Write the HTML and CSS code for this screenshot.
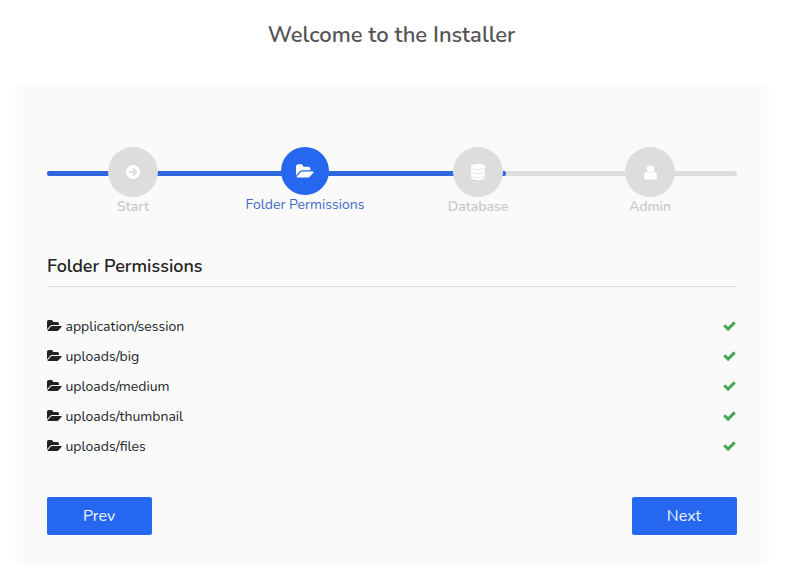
FILE: index.html
```html
<!DOCTYPE html>
<html lang="en">
<head>
<meta charset="utf-8">
<title>Installer</title>
<link rel="stylesheet" href="styles.css">
</head>
<body>
<svg class="sprite" width="0" height="0" aria-hidden="true">
  <symbol id="folder" viewBox="0 0 1920 1792"><path d="M1879 952q0 31-31 66l-336 396q-43 51-120.5 86.5t-143.5 35.5h-1088q-34 0-60.5-13t-26.5-43q0-31 31-66l336-396q43-51 120.5-86.5t143.5-35.5h1088q34 0 60.5 13t26.5 43zm-343-344v160h-832q-94 0-197 47.5t-164 119.5l-337 396-5 6q0-4-.5-12.5t-.5-12.5v-960q0-92 66-158t158-66h320q92 0 158 66t66 158v32h544q92 0 158 66t66 158z"/></symbol>
  <symbol id="check" viewBox="0 0 1792 1792"><path d="M1671 566q0 40-28 68l-724 724-136 136q-28 28-68 28t-68-28l-136-136-362-362q-28-28-28-68t28-68l136-136q28-28 68-28t68 28l294 295 656-657q28-28 68-28t68 28l136 136q28 28 28 68z"/></symbol>
</svg>
<h1 class="title">Welcome to the Installer</h1>
<main class="card">
  <div class="track"><div class="progress"></div></div>
  <ol class="steps">
    <li class="step">
      <span class="dot"><svg width="14" height="14" viewBox="0 0 14 14"><circle cx="7" cy="7" r="7" fill="#fff"/><path d="M2.800 7h7.400M7 3.400 10.600 7 7 10.600" fill="none" stroke="#ddd" stroke-width="1.900"/></svg></span>
      <span class="label">Start</span>
    </li>
    <li class="step active">
      <span class="dot"><svg width="18" height="17"><use href="#folder"/></svg></span>
      <span class="label">Folder Permissions</span>
    </li>
    <li class="step">
      <span class="dot"><svg width="14" height="16" viewBox="0 0 14 16"><path d="M0 2.500C0-.8 14-.8 14 2.500v11c0 3.300-14 3.300-14 0z" fill="#fff"/><path d="M0 4.100c2 2 12 2 14 0M0 8.100c2 2 12 2 14 0M0 12.100c2 2 12 2 14 0" fill="none" stroke="#ddd" stroke-width=".7"/></svg></span>
      <span class="label">Database</span>
    </li>
    <li class="step">
      <span class="dot"><svg width="13" height="15" viewBox="0 0 13 15"><path d="M3 6.800C.8 6.800 0 9 0 12c0 1.700 1 2.500 2.500 2.500h8c1.500 0 2.500-.8 2.500-2.500 0-3-.8-5.200-3-5.200-1.800 1.500-5.200 1.500-7 0z" fill="#fff"/><circle cx="6.500" cy="3.900" r="3.700" fill="#fff"/></svg></span>
      <span class="label">Admin</span>
    </li>
  </ol>
  <h2 class="heading">Folder Permissions</h2>
  <ul class="folders">
    <li><svg class="fi"><use href="#folder"/></svg><span>application/session</span><svg class="ok"><use href="#check"/></svg></li>
    <li><svg class="fi"><use href="#folder"/></svg><span>uploads/big</span><svg class="ok"><use href="#check"/></svg></li>
    <li><svg class="fi"><use href="#folder"/></svg><span>uploads/medium</span><svg class="ok"><use href="#check"/></svg></li>
    <li><svg class="fi"><use href="#folder"/></svg><span>uploads/thumbnail</span><svg class="ok"><use href="#check"/></svg></li>
    <li><svg class="fi"><use href="#folder"/></svg><span>uploads/files</span><svg class="ok"><use href="#check"/></svg></li>
  </ul>
  <div class="actions">
    <button class="btn">Prev</button>
    <button class="btn">Next</button>
  </div>
</main>
</body>
</html>
```
FILE: styles.css
```css
* { box-sizing: border-box; }
body { margin: 0; background: #fff; color: #212529; font-family: Nunito, "Noto Sans", sans-serif; font-size: 14px; overflow: hidden; }
h1, h2, ol, ul { margin: 0; padding: 0; list-style: none; }
.sprite { display: block; position: absolute; }
.title { height: 87px; padding-top: 20px; padding-right: 3px; line-height: 30px; font-size: 22px; font-weight: 620; color: #555; text-align: center; }
.card { width: 750px; height: 477px; margin-left: 17px; padding: 84px 30px 30px; background: #fafafa; border-radius: 4px; box-shadow: 0 0 5px rgba(0, 0, 0, .045); }
.track { height: 5px; border-radius: 2px; background: #ddd; }
.progress { width: 459px; height: 5px; border-radius: 2px; background: #2e67e0; }
.steps { position: relative; display: flex; height: 100px; margin: -29px 0 0; }
.step { flex: 1; display: flex; flex-direction: column; align-items: center; color: #c9c9c9; }
.step:nth-child(2) { padding-right: 1px; }
.dot { width: 50px; height: 50px; border-radius: 50%; background: #ddd; display: flex; align-items: center; justify-content: center; fill: #fff; }
.step:last-child { padding-right: 1px; }
.label { line-height: 20px; font-size: 14px; white-space: nowrap; font-weight: 600; }
.active .dot { width: 48px; height: 48px; background: #2567ef; }
.active .label { color: #4169c8; font-weight: 450; }
.heading { height: 40px; border-bottom: 1px solid #dedede; font-size: 18px; line-height: 39px; font-weight: 650; color: #222; }
.folders { padding-top: 24px; }
.folders li { display: flex; align-items: center; height: 30px; line-height: 20px; font-size: 14px; }
.folders span { padding-top: 2px; font-weight: 450; }
.fi { width: 15px; height: 14px; margin-right: 4px; margin-left: -.5px; fill: #222; }
.ok { width: 15px; height: 14px; margin-left: auto; fill: #45a552; }
.actions { display: flex; justify-content: space-between; margin-top: 36px; }
.btn { width: 105px; height: 38px; padding: 0 1px 0 0; border: 0; border-radius: 2px; background: #2567ef; color: #f0f5ff; font: 450 16px/38px Nunito, "Noto Sans", sans-serif; }
```
